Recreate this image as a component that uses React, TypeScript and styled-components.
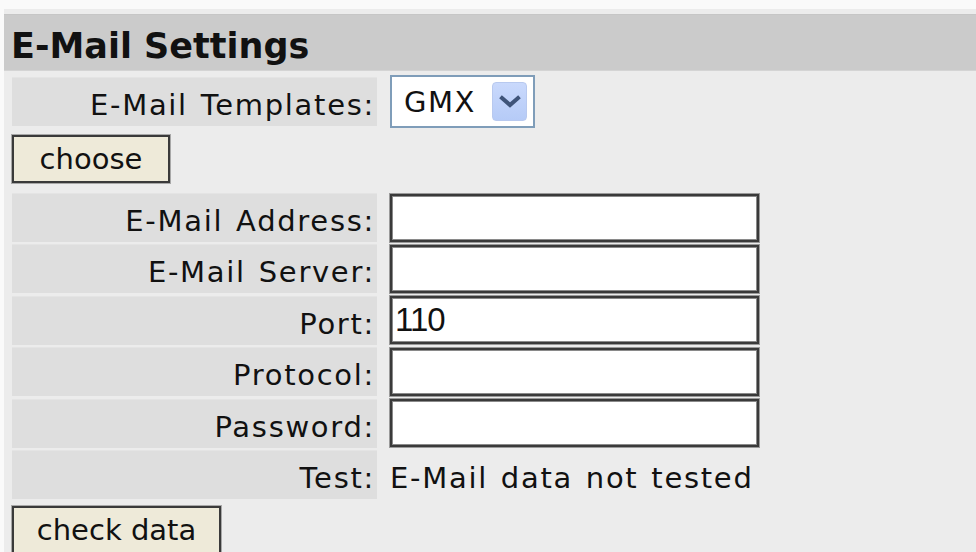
import React from "react";
import styled, { createGlobalStyle } from "styled-components";

const GlobalStyle = createGlobalStyle`
  html, body {
    margin: 0;
    padding: 0;
    background: #fafafa;
  }
  body {
    font-family: "DejaVu Sans", Verdana, sans-serif;
    color: #111;
  }
`;

const Page = styled.div`
  margin: 9px 0 0 4px;
  padding-top: 5px;
  background: #ececec;
  min-height: 560px;
`;

const Heading = styled.h1`
  margin: 0;
  height: 57px;
  box-sizing: border-box;
  padding: 11px 0 0 7px;
  line-height: 40px;
  font-size: 35px;
  font-weight: bold;
  background: #cbcbcb;
  border-top: 1px solid #c6c6c6;
  border-bottom: 1px solid #d4d4d4;
`;

const Section = styled.div`
  padding-left: 8px;
`;

const FieldGrid = styled.div<{ $rowGap: number }>`
  display: grid;
  grid-template-columns: 365px max-content;
  column-gap: 13px;
  row-gap: ${(p) => p.$rowGap}px;
  align-items: center;
`;

const LabelCell = styled.div`
  height: 49px;
  box-sizing: border-box;
  padding: 10px 2px 0 0;
  line-height: 34px;
  text-align: right;
  font-size: 29px;
  letter-spacing: 1.7px;
  word-spacing: 2px;
  background: #dedede;
  border-top: 1px solid #e4e4e4;
  white-space: nowrap;
`;

const ValueText = styled.div`
  font-size: 29px;
  letter-spacing: 1.7px;
  word-spacing: 2px;
  padding-top: 8px;
  white-space: nowrap;
`;

const TextField = styled.input`
  width: 369px;
  height: 48px;
  box-sizing: border-box;
  margin: 0;
  padding: 0 3px;
  border: 2px solid #3a3a3a;
  box-shadow: 0 0 0 1px #9a9a9a, inset 0 0 0 1px #8a8a8a;
  background: #fff;
  font-family: "Liberation Sans", Arial, sans-serif;
  font-size: 33px;
  letter-spacing: -1px;
  color: #111;
  outline: none;
`;

const SelectBox = styled.label`
  display: flex;
  align-items: center;
  width: 145px;
  height: 53px;
  box-sizing: border-box;
  padding: 0 6px 0 12px;
  border: 2px solid #7f9db9;
  background: #fff;
`;

const NativeSelect = styled.select`
  appearance: none;
  flex: 1;
  min-width: 0;
  border: none;
  background: transparent;
  padding: 0;
  font-family: "DejaVu Sans", Verdana, sans-serif;
  font-size: 29px;
  letter-spacing: 1.5px;
  color: #111;
  outline: none;
`;

const DropArrow = styled.span`
  display: flex;
  align-items: center;
  justify-content: center;
  width: 35px;
  height: 39px;
  border-radius: 4px;
  background: linear-gradient(180deg, #c9d9fc 0%, #b6cbf7 100%);
  border: 1px solid #b8c9ef;
  box-sizing: border-box;
`;

const Button = styled.button<{ $width: number }>`
  width: ${(p) => p.$width}px;
  height: 48px;
  box-sizing: border-box;
  margin: 0;
  padding: 0;
  border: 2px solid #3a3a3a;
  box-shadow: 0 0 0 1px #a8a8a8;
  background: #eeead9;
  font-family: "DejaVu Sans", Verdana, sans-serif;
  font-size: 29px;
  color: #111;
  line-height: 40px;
  text-align: center;
  cursor: pointer;
`;

const TemplateRow = styled.div`
  padding-top: 4px;
`;

const ChooseRow = styled.div`
  padding-top: 7px;
`;

const FormBlock = styled.div`
  padding-top: 10px;
`;

const CheckRow = styled.div`
  padding-top: 7px;
`;

const fields: { label: string; value?: string }[] = [
  { label: "E-Mail Address:" },
  { label: "E-Mail Server:" },
  { label: "Port:", value: "110" },
  { label: "Protocol:" },
  { label: "Password:" },
];

export default function App() {
  return (
    <>
      <GlobalStyle />
      <Page>
        <Heading>E-Mail Settings</Heading>
        <Section>
          <TemplateRow>
            <FieldGrid $rowGap={0}>
              <LabelCell>E-Mail Templates:</LabelCell>
              <SelectBox>
                <NativeSelect defaultValue="GMX">
                  <option value="GMX">GMX</option>
                </NativeSelect>
                <DropArrow>
                  <svg width="22" height="14" viewBox="0 0 22 14">
                    <path
                      d="M3 3 L11 10 L19 3"
                      fill="none"
                      stroke="#3f5479"
                      strokeWidth="4"
                      strokeLinecap="square"
                    />
                  </svg>
                </DropArrow>
              </SelectBox>
            </FieldGrid>
          </TemplateRow>
          <ChooseRow>
            <Button $width={158}>choose</Button>
          </ChooseRow>
          <FormBlock>
            <FieldGrid $rowGap={2.4}>
              {fields.map((f) => (
                <React.Fragment key={f.label}>
                  <LabelCell>{f.label}</LabelCell>
                  <TextField
                    type={f.label === "Password:" ? "password" : "text"}
                    defaultValue={f.value ?? ""}
                  />
                </React.Fragment>
              ))}
              <LabelCell>Test:</LabelCell>
              <ValueText>E-Mail data not tested</ValueText>
            </FieldGrid>
          </FormBlock>
          <CheckRow>
            <Button $width={209}>check data</Button>
          </CheckRow>
        </Section>
      </Page>
    </>
  );
}
